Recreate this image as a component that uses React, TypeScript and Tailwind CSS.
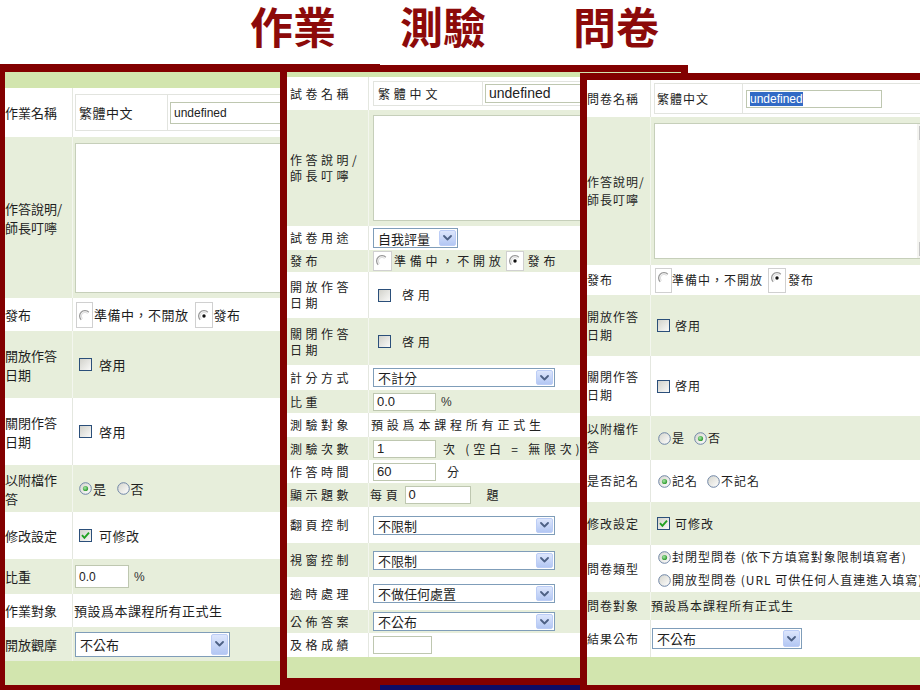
import React from "react";

const LT = "font-['Liberation_Sans',Arial,sans-serif]";

const L_LABEL = "font-['Noto_Sans_CJK_TC','Noto_Sans_CJK_SC',sans-serif] text-[13px] leading-[19px] text-[#1e1e1e]";
const L_TXT = "font-['Noto_Sans_CJK_TC','Noto_Sans_CJK_SC',sans-serif] text-[13px] leading-[18px] tracking-[0.5px] text-[#1e1e1e] whitespace-nowrap";
const M_LABEL = "pl-[3px] font-['Noto_Sans_CJK_TC','Noto_Sans_CJK_SC',sans-serif] text-[12px] leading-[16px] tracking-[3.5px] text-[#222]";
const M_TXT = "font-['Noto_Sans_CJK_TC','Noto_Sans_CJK_SC',sans-serif] text-[12px] leading-[16px] tracking-[3.8px] text-[#222] whitespace-nowrap";
const R_LABEL = "font-['Noto_Sans_CJK_TC','Noto_Sans_CJK_SC',sans-serif] text-[12px] leading-[18px] tracking-[1px] text-[#1e1e1e]";
const R_TXT = "font-['Noto_Sans_CJK_TC','Noto_Sans_CJK_SC',sans-serif] text-[12px] leading-[16px] tracking-[1px] text-[#1e1e1e] whitespace-nowrap";
const SEL_TXT = "font-['Noto_Sans_CJK_TC','Noto_Sans_CJK_SC',sans-serif] text-[13px] leading-[15px] text-[#1e1e1e] whitespace-nowrap";

function XPRadio({ checked }: { checked?: boolean }) {
  return (
    <svg width="13" height="13" viewBox="0 0 13 13" className="shrink-0">
      <defs>
        <linearGradient id="xpr" x1="0" y1="0" x2="1" y2="1">
          <stop offset="0" stopColor="#d4d4cc" />
          <stop offset="1" stopColor="#ffffff" />
        </linearGradient>
        <radialGradient id="xprd" cx="0.4" cy="0.4" r="0.6">
          <stop offset="0" stopColor="#a6e6a6" />
          <stop offset="1" stopColor="#2e9a2e" />
        </radialGradient>
      </defs>
      <circle cx="6.5" cy="6.5" r="5.8" fill="url(#xpr)" stroke="#6f86a6" strokeWidth="1" />
      {checked && <circle cx="6.5" cy="6.5" r="2.6" fill="url(#xprd)" />}
    </svg>
  );
}

function XPCheck({ checked }: { checked?: boolean }) {
  return (
    <svg width="13" height="13" viewBox="0 0 13 13" className="shrink-0">
      <defs>
        <linearGradient id="xpc" x1="0" y1="0" x2="1" y2="1">
          <stop offset="0" stopColor="#d0d0c9" />
          <stop offset="1" stopColor="#fbfbfa" />
        </linearGradient>
      </defs>
      <rect x="0.5" y="0.5" width="12" height="12" fill="url(#xpc)" stroke="#2b4f7a" />
      {checked && <path d="M3 6.2 L5.4 8.8 L10 3.6" fill="none" stroke="#21a121" strokeWidth="1.9" />}
    </svg>
  );
}

function BoxRadio({ checked, cls }: { checked?: boolean; cls: string }) {
  return (
    <span className={`flex shrink-0 items-start border border-[#d0d0d0] bg-white pl-[2px] ${cls}`}>
      <svg width="12" height="12" viewBox="0 0 12 12">
        <path d="M2.2 9.8 A5.2 5.2 0 0 1 9.8 2.2" fill="none" stroke="#9c9c9c" strokeWidth="1.3" />
        <path d="M3.4 8.6 A3.6 3.6 0 0 1 8.6 3.4" fill="none" stroke="#dadada" strokeWidth="1" />
        {checked && <circle cx="6" cy="6" r="1.7" fill="#111" />}
      </svg>
    </span>
  );
}

function Select({ cls, value }: { cls: string; value: string }) {
  return (
    <div className={`flex shrink-0 items-stretch border border-[#7f9db9] bg-white p-[1px] ${cls}`}>
      <span className={`flex flex-1 items-center pl-[3px] ${SEL_TXT}`}>{value}</span>
      <span className="flex w-[17px] items-center justify-center rounded-[2px] border border-[#bccdf6] bg-linear-to-b from-[#dde6fc] to-[#b3c7f3]">
        <svg width="9" height="6" viewBox="0 0 9 6">
          <path d="M1 1 L4.5 4.5 L8 1" fill="none" stroke="#4d6185" strokeWidth="1.8" strokeLinecap="round" strokeLinejoin="round" />
        </svg>
      </span>
    </div>
  );
}

function Input({ cls, value, tcls }: { cls: string; value?: React.ReactNode; tcls?: string }) {
  return (
    <div className={`flex shrink-0 items-center border border-[#bec7b0] bg-white pl-[3px] ${cls}`}>
      <span className={tcls}>{value}</span>
    </div>
  );
}

function Row({
  h,
  g,
  lw,
  lc,
  label,
  children,
}: {
  h: string;
  g?: boolean;
  lw: string;
  lc: string;
  label?: React.ReactNode;
  children?: React.ReactNode;
}) {
  return (
    <div className={`flex shrink-0 ${h} ${g ? "bg-[#e7eedb]" : "bg-white"}`}>
      <div className={`flex shrink-0 items-center ${lw} ${lc}`}>
        <div>{label}</div>
      </div>
      <div className={`flex min-w-0 flex-1 items-center border-l ${g ? "border-[#f3f6ee]" : "border-[#e4e7e0]"}`}>{children}</div>
    </div>
  );
}

function Band({ h }: { h: string }) {
  return <div className={`shrink-0 bg-[#d2e5ae] ${h}`} />;
}

function LeftPanel() {
  const lw = "w-[67px]";
  return (
    <div className="absolute left-0 top-[64px] flex h-[626px] w-[380px] flex-col overflow-hidden border-b-[5px] border-l-[5px] border-r-[5px] border-t-[8px] border-[#820000] bg-white">
      <Band h="h-[16px]" />
      <Row h="h-[49px]" lw={lw} lc={L_LABEL} label="作業名稱">
        <div className="ml-[2px] flex h-[37px] w-[320px] shrink-0 items-center border border-[#e2e4df]">
          <div className={`flex h-full w-[91px] shrink-0 items-center pl-[3px] ${L_TXT}`}>繁體中文</div>
          <div className="flex h-full items-center border-l border-[#e2e4df]">
            <Input cls="ml-[2px] h-[22px] w-[200px]" value="undefined" tcls={`${LT} text-[12px] text-[#222]`} />
          </div>
        </div>
      </Row>
      <Row h="h-[161px]" g lw={lw} lc={L_LABEL} label={<>作答說明/<br />師長叮嚀</>}>
        <div className="ml-[2px] h-[150px] w-[260px] shrink-0 border border-[#c6cfba] bg-white" />
      </Row>
      <Row h="h-[33px]" lw={lw} lc={L_LABEL} label="發布">
        <BoxRadio cls="ml-[3px] h-[26px] w-[17px] pt-[7px]" />
        <span className={`ml-[1px] ${L_TXT}`}>準備中，不開放</span>
        <BoxRadio checked cls="ml-[6px] h-[26px] w-[18px] pt-[7px]" />
        <span className={`ml-[1px] ${L_TXT}`}>發布</span>
      </Row>
      <Row h="h-[67px]" g lw={lw} lc={L_LABEL} label={<>開放作答<br />日期</>}>
        <span className="ml-[6px] flex"><XPCheck /></span>
        <span className={`ml-[7px] ${L_TXT}`}>啓用</span>
      </Row>
      <Row h="h-[67px]" lw={lw} lc={L_LABEL} label={<>關閉作答<br />日期</>}>
        <span className="ml-[6px] flex"><XPCheck /></span>
        <span className={`ml-[7px] ${L_TXT}`}>啓用</span>
      </Row>
      <Row h="h-[47px]" g lw={lw} lc={L_LABEL} label={<>以附檔作<br />答</>}>
        <span className="ml-[6px] flex"><XPRadio checked /></span>
        <span className={`ml-[1px] ${L_TXT}`}>是</span>
        <span className="ml-[10px] flex"><XPRadio /></span>
        <span className={`ml-[1px] ${L_TXT}`}>否</span>
      </Row>
      <Row h="h-[47px]" lw={lw} lc={L_LABEL} label="修改設定">
        <span className="ml-[6px] flex"><XPCheck checked /></span>
        <span className={`ml-[7px] ${L_TXT}`}>可修改</span>
      </Row>
      <Row h="h-[35px]" g lw={lw} lc={L_LABEL} label="比重">
        <Input cls="ml-[2px] h-[23px] w-[54px]" value="0.0" tcls={`${LT} text-[12px] text-[#222]`} />
        <span className={`ml-[5px] ${LT} text-[12px] text-[#333]`}>%</span>
      </Row>
      <Row h="h-[33px]" lw={lw} lc={L_LABEL} label="作業對象">
        <span className={`ml-[1px] ${L_TXT}`}>預設爲本課程所有正式生</span>
      </Row>
      <Row h="h-[34px]" g lw={lw} lc={L_LABEL} label="開放觀摩">
        <Select cls="ml-[2px] h-[25px] w-[155px]" value="不公布" />
      </Row>
      <Band h="h-[24px]" />
    </div>
  );
}

function MiddlePanel() {
  const lw = "w-[81px]";
  const lat = `${LT} text-[13px] text-[#222]`;
  return (
    <div className="absolute left-[280px] top-[65px] flex h-[620px] w-[408px] flex-col overflow-hidden border-[7px] border-[#820000] bg-white">
      <Band h="h-[5px]" />
      <Row h="h-[33px]" lw={lw} lc={M_LABEL} label="試卷名稱">
        <div className="ml-[4px] flex h-[25px] w-[300px] shrink-0 items-center border border-[#e2e4df]">
          <div className={`flex h-full w-[108px] shrink-0 items-center pl-[4px] ${M_TXT}`}>繁體中文</div>
          <div className="flex h-full items-center border-l border-[#e2e4df]">
            <Input cls="ml-[2px] h-[19px] w-[130px]" value="undefined" tcls={`${LT} text-[14px] text-[#222]`} />
          </div>
        </div>
      </Row>
      <Row h="h-[116px]" g lw={lw} lc={M_LABEL} label={<>作答說明/<br />師長叮嚀</>}>
        <div className="ml-[4px] h-[106px] w-[240px] shrink-0 border border-[#c6cfba] bg-white" />
      </Row>
      <Row h="h-[24px]" lw={lw} lc={M_LABEL} label="試卷用途">
        <Select cls="ml-[4px] h-[20px] w-[85px]" value="自我評量" />
      </Row>
      <Row h="h-[22px]" g lw={lw} lc={M_LABEL} label="發布">
        <BoxRadio cls="ml-[4px] h-[20px] w-[19px] pt-[3px]" />
        <span className={`ml-[2px] ${M_TXT}`}>準備中，不開放</span>
        <BoxRadio checked cls="ml-[1px] h-[20px] w-[18px] pt-[3px]" />
        <span className={`ml-[4px] ${M_TXT}`}>發布</span>
      </Row>
      <Row h="h-[46px]" lw={lw} lc={M_LABEL} label={<>開放作答<br />日期</>}>
        <span className="ml-[9px] flex"><XPCheck /></span>
        <span className={`ml-[11px] ${M_TXT}`}>啓用</span>
      </Row>
      <Row h="h-[47px]" g lw={lw} lc={M_LABEL} label={<>關閉作答<br />日期</>}>
        <span className="ml-[9px] flex"><XPCheck /></span>
        <span className={`ml-[11px] ${M_TXT}`}>啓用</span>
      </Row>
      <Row h="h-[25px]" lw={lw} lc={M_LABEL} label="計分方式">
        <Select cls="ml-[4px] h-[19px] w-[182px]" value="不計分" />
      </Row>
      <Row h="h-[23px]" g lw={lw} lc={M_LABEL} label="比重">
        <Input cls="ml-[4px] h-[18px] w-[63px]" value="0.0" tcls={lat} />
        <span className={`ml-[5px] ${LT} text-[12px] text-[#333]`}>%</span>
      </Row>
      <Row h="h-[24px]" lw={lw} lc={M_LABEL} label="測驗對象">
        <span className={`ml-[2px] ${M_TXT}`}>預設爲本課程所有正式生</span>
      </Row>
      <Row h="h-[23px]" g lw={lw} lc={M_LABEL} label="測驗次數">
        <Input cls="ml-[4px] h-[18px] w-[63px]" value="1" tcls={lat} />
        <span className={`ml-[7px] ${M_TXT}`}>次 (空白 = 無限次)</span>
      </Row>
      <Row h="h-[23px]" lw={lw} lc={M_LABEL} label="作答時間">
        <Input cls="ml-[4px] h-[18px] w-[63px]" value="60" tcls={lat} />
        <span className={`ml-[11px] ${M_TXT}`}>分</span>
      </Row>
      <Row h="h-[24px]" g lw={lw} lc={M_LABEL} label="顯示題數">
        <span className={`ml-[1px] ${M_TXT}`}>每頁</span>
        <Input cls="ml-[3px] h-[18px] w-[66px]" value="0" tcls={lat} />
        <span className={`ml-[16px] ${M_TXT}`}>題</span>
      </Row>
      <Row h="h-[36px]" lw={lw} lc={M_LABEL} label="翻頁控制">
        <Select cls="ml-[4px] h-[19px] w-[182px]" value="不限制" />
      </Row>
      <Row h="h-[34px]" g lw={lw} lc={M_LABEL} label="視窗控制">
        <Select cls="ml-[4px] h-[19px] w-[182px]" value="不限制" />
      </Row>
      <Row h="h-[33px]" lw={lw} lc={M_LABEL} label="逾時處理">
        <Select cls="ml-[4px] h-[19px] w-[182px]" value="不做任何處置" />
      </Row>
      <Row h="h-[23px]" g lw={lw} lc={M_LABEL} label="公佈答案">
        <Select cls="ml-[4px] h-[19px] w-[182px]" value="不公布" />
      </Row>
      <Row h="h-[24px]" lw={lw} lc={M_LABEL} label="及格成績">
        <Input cls="ml-[4px] h-[18px] w-[59px]" />
      </Row>
      <Band h="h-[21px]" />
    </div>
  );
}

function RightPanel() {
  const lw = "w-[63px]";
  return (
    <div className="absolute left-[580px] top-[73px] flex h-[617px] w-[380px] flex-col overflow-hidden border-b-[5px] border-l-[7px] border-r-[7px] border-t-[7px] border-[#820000] bg-white">
      <Row h="h-[37px]" lw={lw} lc={R_LABEL} label="問卷名稱">
        <div className="ml-[3px] flex h-[31px] w-[300px] shrink-0 items-center border border-[#e2e4df]">
          <div className={`flex h-full w-[87px] shrink-0 items-center pl-[2px] ${R_TXT}`}>繁體中文</div>
          <div className="flex h-full items-center border-l border-[#e2e4df]">
            <Input
              cls="ml-[3px] h-[18px] w-[136px]"
              value={<span className="bg-[#316ac5] text-white">undefined</span>}
              tcls={`${LT} text-[12px] leading-[14px]`}
            />
          </div>
        </div>
      </Row>
      <Row h="h-[148px]" g lw={lw} lc={R_LABEL} label={<>作答說明/<br />師長叮嚀</>}>
        <div className="ml-[3px] flex h-[136px] w-[281px] shrink-0 justify-end border border-[#c6cfba] bg-white">
          <div className="flex w-[17px] flex-col justify-between bg-[#f4f4f0] p-[2px]">
            <div className="h-[14px] border border-[#c4c4c4] bg-white" />
            <div className="h-[14px] border border-[#c4c4c4] bg-white" />
          </div>
        </div>
      </Row>
      <Row h="h-[30px]" lw={lw} lc={R_LABEL} label="發布">
        <BoxRadio cls="ml-[4px] h-[25px] w-[17px] pt-[3px]" />
        <span className={`ml-[0px] ${R_TXT}`}>準備中，不開放</span>
        <BoxRadio checked cls="ml-[5px] h-[25px] w-[18px] pt-[3px]" />
        <span className={`ml-[2px] ${R_TXT}`}>發布</span>
      </Row>
      <Row h="h-[61px]" g lw={lw} lc={R_LABEL} label={<>開放作答<br />日期</>}>
        <span className="ml-[6px] flex"><XPCheck /></span>
        <span className={`ml-[5px] ${R_TXT}`}>啓用</span>
      </Row>
      <Row h="h-[60px]" lw={lw} lc={R_LABEL} label={<>關閉作答<br />日期</>}>
        <span className="ml-[6px] flex"><XPCheck /></span>
        <span className={`ml-[5px] ${R_TXT}`}>啓用</span>
      </Row>
      <Row h="h-[44px]" g lw={lw} lc={R_LABEL} label={<>以附檔作<br />答</>}>
        <span className="ml-[7px] flex"><XPRadio /></span>
        <span className={`ml-[1px] ${R_TXT}`}>是</span>
        <span className="ml-[9px] flex"><XPRadio checked /></span>
        <span className={`ml-[1px] ${R_TXT}`}>否</span>
      </Row>
      <Row h="h-[42px]" lw={lw} lc={R_LABEL} label="是否記名">
        <span className="ml-[7px] flex"><XPRadio checked /></span>
        <span className={`ml-[1px] ${R_TXT}`}>記名</span>
        <span className="ml-[9px] flex"><XPRadio /></span>
        <span className={`ml-[1px] ${R_TXT}`}>不記名</span>
      </Row>
      <Row h="h-[43px]" g lw={lw} lc={R_LABEL} label="修改設定">
        <span className="ml-[6px] flex"><XPCheck checked /></span>
        <span className={`ml-[5px] ${R_TXT}`}>可修改</span>
      </Row>
      <Row h="h-[47px]" lw={lw} lc={R_LABEL} label="問卷類型">
        <div className="ml-[7px] flex flex-col gap-[7px]">
          <div className="flex items-center">
            <XPRadio checked />
            <span className={`ml-[1px] ${R_TXT}`}>封閉型問卷 (依下方填寫對象限制填寫者)</span>
          </div>
          <div className="flex items-center">
            <XPRadio />
            <span className={`ml-[1px] ${R_TXT}`}>開放型問卷 (URL 可供任何人直連進入填寫)</span>
          </div>
        </div>
      </Row>
      <Row h="h-[28px]" g lw={lw} lc={R_LABEL} label="問卷對象">
        <span className={`ml-[0px] ${R_TXT}`}>預設爲本課程所有正式生</span>
      </Row>
      <Row h="h-[37px]" lw={lw} lc={R_LABEL} label="結果公布">
        <Select cls="ml-[1px] h-[21px] w-[150px]" value="不公布" />
      </Row>
      <Band h="h-[28px]" />
    </div>
  );
}

export default function App() {
  return (
    <div className="relative h-[690px] w-[920px] overflow-hidden bg-white">
      <div className="flex h-[60px] items-start pl-[250px] pt-[5px] font-['Liberation_Sans','Noto_Sans_CJK_TC','Noto_Sans_CJK_SC',sans-serif] text-[43px] font-bold leading-[48px] text-[#8c0a0a]">
        <span>作業</span>
        <span className="ml-[64px]">測驗</span>
        <span className="ml-[87px]">問卷</span>
      </div>
      <LeftPanel />
      <div className="absolute left-[380px] top-[685px] h-[5px] w-[200px] bg-[#0c0c66]" />
      <MiddlePanel />
      <RightPanel />
    </div>
  );
}
